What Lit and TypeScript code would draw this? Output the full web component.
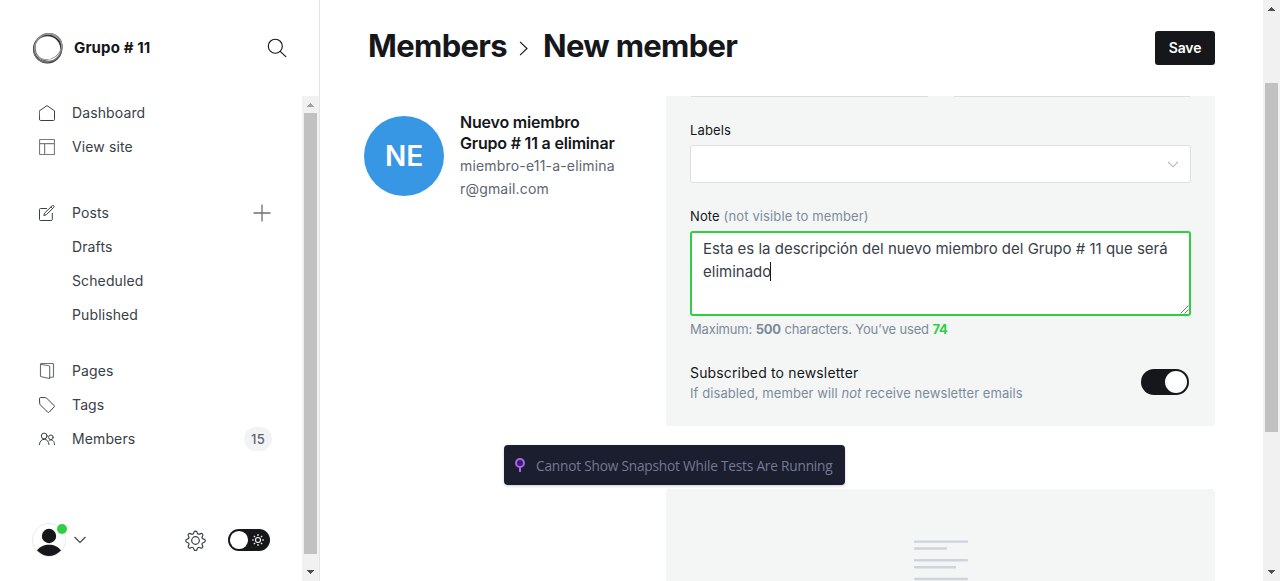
import { LitElement, html, css, svg } from "lit";
import { customElement, property } from "lit/decorators.js";

const stroke = (body: unknown, size = 16, box = "0 0 16 16", cls = "") =>
  html`<svg class=${cls} width=${size} height=${size} viewBox=${box} fill="none" stroke="currentColor"
    stroke-width="1" stroke-linecap="round" stroke-linejoin="round">${body}</svg>`;

const icons: Record<string, unknown> = {
  home: svg`<path d="M.5 5.800 8 .6l7.500 5.200v8.700a1 1 0 0 1-1 1h-13a1 1 0 0 1-1-1z"/>`,
  site: svg`<g stroke="#777c84" stroke-width="1.200"><rect x=".5" y=".5" width="15" height="15" rx="1"/><path d="M.5 4.700h15M5.600 4.700v10.800"/></g>`,
  posts: svg`<path d="M7.500 3.500h-6a1 1 0 0 0-1 1v10a1 1 0 0 0 1 1h10.800a1 1 0 0 0 1-1V8.300M7 9.800l-2.200.8.700-2.400 7.600-7.400a1.150 1.150 0 0 1 1.700 1.600zM12 2l1.600 1.600"/>`,
  pages: svg`<g stroke="#6b7179" stroke-width="1.150"><path d="M1.500 1.300 9.800 2.800a1 1 0 0 1 .9 1v11.700L2.300 13.700a1 1 0 0 1-.8-1z"/><path d="M1.500 1.300q.2-.8 1-.8h11a1 1 0 0 1 1 1v11.700a1 1 0 0 1-1 1h-2.800"/></g>`,
  tags: svg`<path d="M.5 1.500a1 1 0 0 1 1-1L6.600.7a2 2 0 0 1 1.100.5l7.400 7.400a1 1 0 0 1 0 1.400l-5 5.200a1 1 0 0 1-1.400 0L1.300 7.800A2 2 0 0 1 .7 6.500z"/>`,
  members: svg`<circle cx="5.200" cy="5" r="2.900"/><path d="M.5 13.600c0-3 1.700-5.200 4.700-5.200s4.600 2 4.800 5.200"/><circle cx="11.900" cy="6.300" r="2.300"/><path d="M10.300 9.200c3-1.200 5.200.8 5.200 4.400"/>`,
};

@customElement("nav-row")
class NavRow extends LitElement {
  @property() icon = "";
  @property() label = "";
  static styles = css`
    :host { display: flex; align-items: center; height: 34px; padding: 0 30px 0 39px; color: #394047;
      font: 400 14px/34px Inter, sans-serif; letter-spacing: .12px; }
    .icon { display: flex; width: 33px; color: #394047; }
    .label { flex: 1; }
  `;
  render() {
    return html`<span class="icon">${this.icon ? stroke(icons[this.icon]) : ""}</span>
      <span class="label">${this.label}</span><slot></slot>`;
  }
}

@customElement("scroll-rail")
class ScrollRail extends LitElement {
  @property({ type: Number }) start = 0;
  @property({ type: Number }) size = 0;
  @property({ type: Boolean }) top = false;
  static styles = css`
    :host { display: flex; flex-direction: column; align-items: center; justify-content: space-between;
      width: 17px; background: #f1f1f1; }
    .arrow { height: 17px; flex: none; }
    .track { flex: 1; width: 13px; }
    .thumb { width: 13px; background: #c1c1c1; }
  `;
  render() {
    return html`<svg class="arrow" width="17" height="17" shape-rendering="crispEdges">
        <path d="M5 11h7v-1h-1V9h-1V8H9V7H8v1H7v1H6v1H5z" fill=${this.top ? "#a3a3a3" : "#505050"} /></svg>
      <div class="track"><div class="thumb" style="margin-top:${this.start}px;height:${this.size}px"></div></div>
      <svg class="arrow" width="17" height="17" shape-rendering="crispEdges">
        <path d="M5 6h7v1h-1v1h-1v1H9v1H8V9H7V8H6V7H5z" fill="#505050" /></svg>`;
  }
}

@customElement("app-root")
class AppRoot extends LitElement {
  static styles = css`
    :host { display: grid; grid-template-columns: 319px 1fr 17px; height: 581px; overflow: hidden;
      position: relative; background: #fff; color: #15171a; font-family: Inter, sans-serif; }
    * { box-sizing: border-box; }
    svg { display: block; flex: none; }
    .side { display: grid; grid-template-rows: 96px 1fr; border-right: 1px solid #e2e4e6; width: 320px; }
    .brand { display: flex; align-items: center; padding: 0 32px; }
    .brand b { flex: 1; margin: -1px 0 0 10px; font-size: 15px; font-weight: 700; letter-spacing: .12px; }
    .sidebody { display: grid; grid-template-columns: 302px 17px; min-height: 0; }
    .menu { display: flex; flex-direction: column; }
    .group { margin-bottom: 32px; }
    .group.posts { margin-bottom: 22px; }
    .plus { color: #6b7078; margin-right: 1px; }
    .count { width: 28px; height: 24px; border-radius: 12px; background: #f1f3f4; text-align: center;
      font: 500 13px/24px Inter, sans-serif; letter-spacing: .2px; color: #5d6470; }
    .foot { display: flex; align-items: center; margin-top: auto; height: 82px; padding: 0 32px; }
    .user { position: relative; width: 34px; height: 34px; }
    .dot { position: absolute; top: 1px; left: 25px; width: 10px; height: 10px; border-radius: 50%; background: #30cf43; }
    .down { margin-left: 8px; }
    .gear { margin-left: auto; }
    .night { margin-left: 22px; }
    .main { display: grid; grid-template-rows: 96px 1fr; min-width: 0; min-height: 0; padding-left: 45px; }
    .head { display: flex; align-items: center; padding: 0 48px 0 4px; }
    .head h1 { display: flex; align-items: center; margin: -5px 0 0; font-size: 31px; font-weight: 700; line-height: 40px; letter-spacing: -.67px; }
    .chev { margin: 6px 15px 0 12px; }
    .save { margin-left: auto; width: 60px; height: 34px; border-radius: 3px; background: #15171a; color: #fff;
      font-size: 14px; font-weight: 600; line-height: 34px; text-align: center; letter-spacing: -.15px; }
    .cols { display: grid; grid-template-columns: 302px 549px; min-height: 0; overflow: hidden; }
    .person { display: flex; padding-top: 20px; }
    .avatar { width: 80px; height: 80px; border-radius: 50%; background: #3797e4; color: #fff; text-align: center;
      font-size: 28px; font-weight: 600; line-height: 80px; margin-right: 16px; letter-spacing: -.2px; }
    .name { margin-top: -4px; font-size: 16px; font-weight: 600; line-height: 21px; letter-spacing: -.2px; white-space: nowrap; }
    .mail { font-size: 14px; line-height: 23px; color: #5d6570; letter-spacing: .18px; }
    .panel { height: 330px; padding: 0 24px; background: #f4f6f6; border-radius: 0 0 3px 3px; }
    .ends { display: flex; gap: 26px; height: 1px; padding: 0 1px; }
    .ends i { flex: 1; background: #dcdfdf; }
    .label { font-size: 13px; line-height: 20px; letter-spacing: .13px; }
    .first { padding-top: 23px; }
    .muted { color: #7c8b9a; }
    .select { display: flex; align-items: center; justify-content: flex-end; height: 38px; margin: 5px 0 23px; padding-right: 11px;
      border: 1px solid #dddfe0; border-radius: 3px; background: #fff; color: #abb4be; }
    .note { display: flex; height: 85px; margin-top: 5px; border: 2px solid #30cf43; border-radius: 3px; background: #fff;
      padding: 4px 0 0 11px; color: #394047; font-size: 15px; line-height: 23px; letter-spacing: 0; }
    .text { flex: 1; white-space: nowrap; }
    .caret { display: inline-block; width: 1px; height: 19px; margin-left: -1px; vertical-align: -4px; background: #15171a; }
    .grip { align-self: flex-end; }
    .help { margin-top: 3px; font-size: 13px; line-height: 20px; color: #7c8b9a; letter-spacing: -.17px; }
    .help b { font-weight: 700; }
    .help .used { color: #30cf43; }
    .switch { display: flex; align-items: center; justify-content: space-between; margin-top: 24px; padding-right: 2px; }
    .switch strong { display: block; font-size: 14px; line-height: 20px; font-weight: 400; letter-spacing: .15px; }
    .switch .sub { font-size: 13px; line-height: 20px; color: #7c8b9a; letter-spacing: .08px; }
    .toggle { display: flex; justify-content: flex-end; width: 48px; height: 26px; padding: 2px; margin-bottom: 2px; border-radius: 13px; background: #15171a; }
    .toggle i { width: 22px; height: 22px; border-radius: 50%; background: #fff; }
    .empty { height: 92px; margin-top: 63px; padding: 51px 0 0 248px; background: #f4f6f6; border-radius: 3px 3px 0 0; }
    .snap { position: absolute; left: 504px; top: 445px; display: flex; align-items: center; width: 341px; height: 40px;
      padding-left: 10px; border-radius: 4px; background: #1b1e2e; color: #747994; box-shadow: 0 1px 3px #0003;
      font: 400 13.700px/40px "Open Sans", sans-serif; letter-spacing: -.21px; white-space: nowrap; }
    .snap span { margin: 2px 0 0 10px; }
  `;

  render() {
    return html`
      <div class="side">
        <div class="brand">
          <svg width="32" height="32" viewBox="0 0 32 32" fill="none" stroke="#333">
            <circle cx="15.500" cy="17" r="13.700" stroke-width="1.800" />
            <ellipse cx="16.500" cy="15.500" rx="13.500" ry="13.800" stroke-width="1.300" stroke="#666" />
            <ellipse cx="16" cy="16" rx="15" ry="13.300" transform="rotate(-48 16 16)" stroke="#777" />
            <ellipse cx="16.800" cy="15" rx="14" ry="12.300" transform="rotate(-35 16 16)" stroke="#999" />
          </svg>
          <b>Grupo # 11</b>
          <svg width="20" height="20" viewBox="0 0 20 20" fill="none" stroke="#15171a" stroke-width="1.150" stroke-linecap="round">
            <circle cx="8.300" cy="8.200" r="7" /><path d="m13.200 13.300 5.600 5.400" /></svg>
        </div>
        <div class="sidebody">
          <div class="menu">
            <div class="group">
              <nav-row icon="home" label="Dashboard"></nav-row>
              <nav-row icon="site" label="View site"></nav-row>
            </div>
            <div class="group posts">
              <nav-row icon="posts" label="Posts">
                <svg class="plus" width="18" height="18" stroke="currentColor" stroke-width="1.300"><path d="M9 .5v17M.5 9h17" /></svg>
              </nav-row>
              <nav-row label="Drafts"></nav-row>
              <nav-row label="Scheduled"></nav-row>
              <nav-row label="Published"></nav-row>
            </div>
            <nav-row icon="pages" label="Pages"></nav-row>
            <nav-row icon="tags" label="Tags"></nav-row>
            <nav-row icon="members" label="Members"><span class="count">15</span></nav-row>
            <div class="foot">
              <div class="user">
                <svg width="34" height="34" viewBox="0 0 34 34"><circle cx="17" cy="17" r="16.500" fill="#fff" stroke="#e8eaeb" />
                  <circle cx="17" cy="13" r="7.200" fill="#15171a" /><path d="M5 27.500C10 19.700 24 19.700 29 27.500Q17 38.500 5 27.500z" fill="#15171a" /></svg>
                <i class="dot"></i>
              </div>
              <svg class="down" width="12" height="8" fill="none" stroke="#394047" stroke-width="1.100"><path d="m.5 1 5.500 5.500L11.500 1" /></svg>
              <svg class="gear" width="21" height="21" viewBox="0 0 21 21" fill="none" stroke="#394047" stroke-width="1.200" stroke-linejoin="round">
                <path d="M9 2.100a1.600 1.600 0 0 1 3 0l.4 1.100a1.600 1.600 0 0 0 2.200.9l1-.5a1.600 1.600 0 0 1 2.100 2.100l-.5 1a1.600 1.600 0 0 0 .9 2.200l1.100.4a1.600 1.600 0 0 1 0 3l-1.100.4a1.600 1.600 0 0 0-.9 2.200l.5 1a1.600 1.600 0 0 1-2.100 2.100l-1-.5a1.600 1.600 0 0 0-2.200.9l-.4 1.100a1.600 1.600 0 0 1-3 0l-.4-1.100a1.600 1.600 0 0 0-2.200-.9l-1 .5a1.600 1.600 0 0 1-2.100-2.100l.5-1a1.600 1.600 0 0 0-.9-2.200l-1.100-.4a1.600 1.600 0 0 1 0-3l1.100-.4a1.600 1.600 0 0 0 .9-2.200l-.5-1a1.600 1.600 0 0 1 2.100-2.100l1 .5a1.600 1.600 0 0 0 2.200-.9z" />
                <circle cx="10.500" cy="10.500" r="3.800" /></svg>
              <svg class="night" width="42" height="22"><rect width="42" height="22" rx="11" fill="#15171a" />
                <circle cx="11" cy="11" r="9.100" fill="#fff" />
                <g fill="none" stroke="#fff" stroke-width="1.100"><circle cx="30" cy="11" r="2.500" />
                  <path d="M30 5v2M30 15v2M24 11h2M34 11h2M25.800 6.800l1.300 1.300M32.900 13.900l1.300 1.300M25.800 15.200l1.300-1.300M32.900 8.100l1.300-1.300" /></g></svg>
            </div>
          </div>
          <scroll-rail top start="0" size="441"></scroll-rail>
        </div>
      </div>
      <div class="main">
        <div class="head">
          <h1>Members<svg class="chev" width="9" height="15" fill="none" stroke="#15171a" stroke-width="1.150"><path d="m1 .8 7 6.700-7 6.700" /></svg>New member</h1>
          <div class="save">Save</div>
        </div>
        <div class="cols">
          <div class="person">
            <div class="avatar">NE</div>
            <div>
              <div class="name">Nuevo miembro<br />Grupo # 11 a eliminar</div>
              <div class="mail">miembro-e11-a-elimina<br />r@gmail.com</div>
            </div>
          </div>
          <div>
            <div class="panel">
              <div class="ends"><i></i><i></i></div>
              <div class="label first">Labels</div>
              <div class="select"><svg width="12" height="7" fill="none" stroke="currentColor" stroke-width="1.100"><path d="m1 .8 5 5 5-5" /></svg></div>
              <div class="label">Note <span class="muted">(not visible to member)</span></div>
              <div class="note">
                <div class="text">Esta es la descripción del nuevo miembro del Grupo # 11 que será<br />eliminado<i class="caret"></i></div>
                <svg class="grip" width="9" height="9" stroke="#555" stroke-width=".8"><path d="M.5 8.500 8.500.5M4.500 8.500l4-4" /></svg>
              </div>
              <div class="help">Maximum: <b>500</b> characters. You’ve used <b class="used">74</b></div>
              <div class="switch">
                <div><strong>Subscribed to newsletter</strong><div class="sub">If disabled, member will <em>not</em> receive newsletter emails</div></div>
                <div class="toggle"><i></i></div>
              </div>
            </div>
            <div class="empty">
              <svg width="54" height="42" stroke="#ced4dc" stroke-width="2.400" stroke-linecap="round">
                <path d="M1 1.600h52M1 8.500h31M1 20.300h52M1 27.300h40M1 39h52" /></svg>
            </div>
          </div>
        </div>
      </div>
      <scroll-rail start="66" size="349"></scroll-rail>
      <div class="snap">
        <svg width="12" height="16" viewBox="0 0 12 16" fill="#3f1f6b" stroke="#a866ee" stroke-width="2"><path d="M6 9v6" /><circle cx="6" cy="6" r="4" /></svg>
        <span>Cannot Show Snapshot While Tests Are Running</span>
      </div>`;
  }
}
